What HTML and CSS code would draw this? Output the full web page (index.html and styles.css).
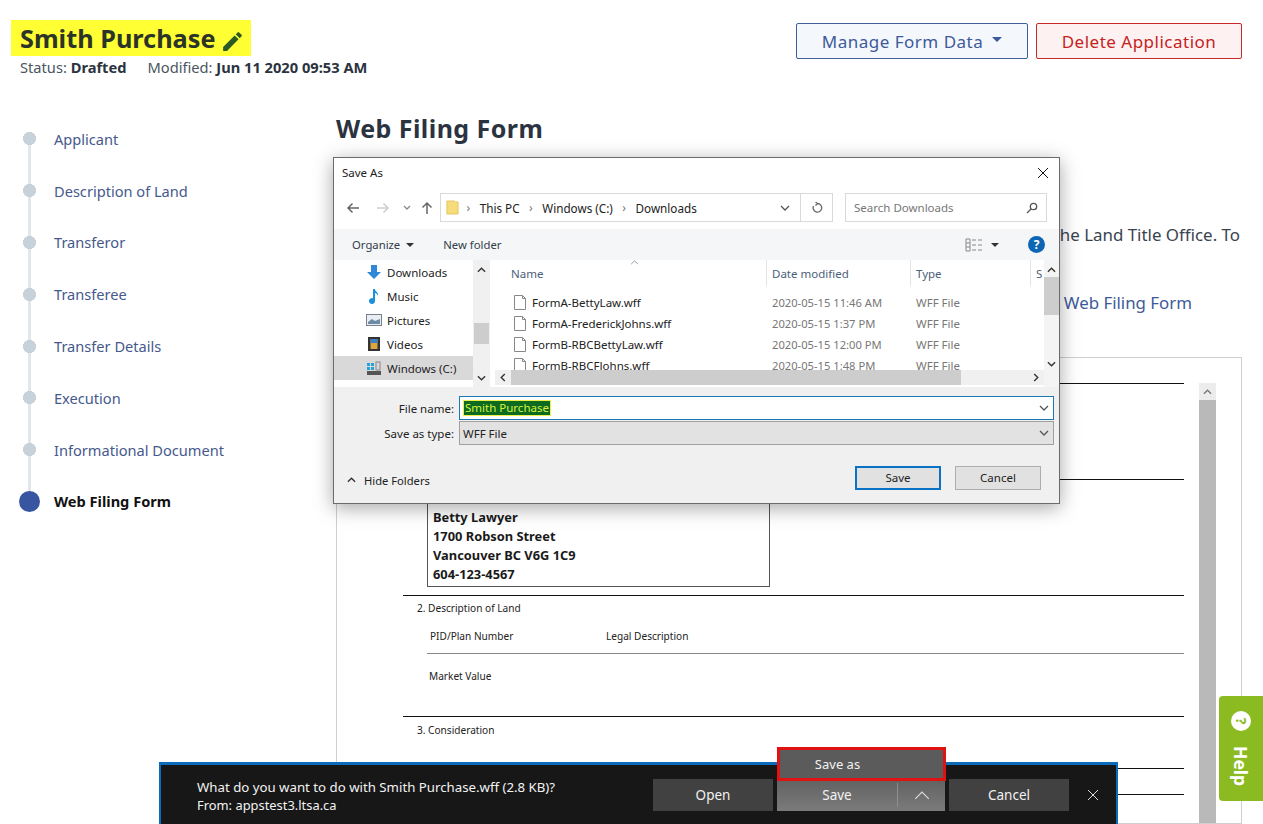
FILE: index.html
```html
<!DOCTYPE html>
<html lang="en">
<head>
<meta charset="utf-8">
<title>Smith Purchase</title>
<link rel="stylesheet" href="styles.css">
</head>
<body>
<header class="top">
  <div>
    <h2 class="app-title"><span>Smith Purchase</span>
      <svg class="pencil" viewBox="0 0 24 24"><path d="M3 17.25V21h3.75L17.8 9.94l-3.75-3.75L3 17.25zM20.7 7.04a1 1 0 0 0 0-1.41l-2.34-2.34a1 1 0 0 0-1.41 0l-1.83 1.83 3.75 3.75 1.83-1.83z"/></svg>
    </h2>
    <p class="status"><span>Status: <b>Drafted</b></span><span>Modified: <b>Jun 11 2020 09:53 AM</b></span></p>
  </div>
  <div class="top-actions">
    <button class="btn btn-blue">Manage Form Data<i class="caret"></i></button>
    <button class="btn btn-red">Delete Application</button>
  </div>
</header>

<main class="main">
  <ul class="steps">
    <li><i></i>Applicant</li>
    <li><i></i>Description of Land</li>
    <li><i></i>Transferor</li>
    <li><i></i>Transferee</li>
    <li><i></i>Transfer Details</li>
    <li><i></i>Execution</li>
    <li><i></i>Informational Document</li>
    <li class="active"><i></i>Web Filing Form</li>
  </ul>
  <section class="content">
    <h1>Web Filing Form</h1>
    <p class="intro">Download this form and submit it to the Land Title Office. To</p>
    <p class="link-row"><a>Web Filing Form</a></p>
    <div class="frame">
      <div class="doc">
        <div class="sec sec-a"></div>
        <div class="sec sec-b">
          <div class="addr">Betty Lawyer<br>1700 Robson Street<br>Vancouver BC V6G 1C9<br>604-123-4567</div>
        </div>
        <div class="sec sec-c">
          <div class="label">2. Description of Land</div>
          <div class="land-head"><span>PID/Plan Number</span><span>Legal Description</span></div>
          <div class="market">Market Value</div>
        </div>
        <div class="sec sec-d"><div class="label">3. Consideration</div></div>
        <div class="sec sec-e"></div>
        <div class="sec sec-f"></div>
      </div>
      <div class="vbar"><div class="vbar-up"><svg viewBox="0 0 10 6"><path d="M1 5l4-4 4 4"/></svg></div><div class="vbar-thumb"></div></div>
    </div>
  </section>
</main>

<aside class="help">
  <span class="help-q">?</span>
  <span class="help-text">Help</span>
</aside>

<div class="dialog">
  <div class="d-title"><span>Save As</span>
    <svg class="d-x" viewBox="0 0 12 12"><path d="M1 1l10 10M11 1L1 11"/></svg>
  </div>
  <div class="d-nav">
    <div class="d-arrows">
      <svg class="nav-ic" viewBox="0 0 14 14"><path d="M13 7H2M6.500 2.500L2 7l4.500 4.500"/></svg>
      <svg class="nav-ic faint" viewBox="0 0 14 14"><path d="M1 7h11M7.500 2.500L12 7l-4.500 4.500"/></svg>
      <svg class="nav-sm" viewBox="0 0 8 6"><path d="M1 1l3 3 3-3"/></svg>
      <svg class="nav-ic nav-up" viewBox="0 0 14 14"><path d="M7 13V2M2.500 6.500L7 2l4.500 4.500"/></svg>
    </div>
    <div class="d-address">
      <svg class="folder" viewBox="0 0 14 16"><path d="M1 1h8l1 1h3v13H1z" fill="#f7dc7c" stroke="#e2c25a"/></svg>
      <span class="crumb">›</span><span>This PC</span><span class="crumb">›</span><span>Windows (C:)</span><span class="crumb">›</span><span>Downloads</span>
      <svg class="addr-drop" viewBox="0 0 10 6"><path d="M1 1l4 4 4-4"/></svg>
      <span class="addr-refresh"><svg viewBox="0 0 12 12"><path d="M6.500 1.500A4.300 4.300 0 1 1 2.500 4M6.500 1.500L4.500 0M6.500 1.500L4.500 3.500"/></svg></span>
    </div>
    <div class="d-search"><span>Search Downloads</span>
      <svg viewBox="0 0 12 12"><circle cx="7.500" cy="4.500" r="3.200"/><path d="M5 7l-4 4"/></svg>
    </div>
  </div>
  <div class="d-tools">
    <span class="tool">Organize<i class="mini-caret"></i></span>
    <span class="tool tool-new">New folder</span>
    <svg class="view-ic" viewBox="0 0 18 14"><path d="M1 1h4v12H1zM1 5h4M1 9h4M7 2h4M13 2h4M7 7h4M13 7h4M7 12h4M13 12h4"/></svg>
    <i class="mini-caret view-caret"></i>
    <span class="q-ic">?</span>
  </div>
  <div class="d-body">
    <div class="tree">
      <div class="tree-row"><svg viewBox="0 0 16 16"><path d="M5 1h6v7h4l-7 7-7-7h4z" fill="#2f87d8"/></svg>Downloads</div>
      <div class="tree-row"><svg viewBox="0 0 16 16"><path d="M7 1h2c0 3 4 3 3 7-.5-2-2-3-3-3v8a3 3 0 1 1-2-2.800z" fill="#1c8fdd"/></svg>Music</div>
      <div class="tree-row"><svg viewBox="0 0 16 16"><rect x="0.500" y="2.500" width="15" height="11" fill="#e8eef3" stroke="#77818a"/><path d="M2 10l4-3 3 2 5-2v5H2z" fill="#6d8aa6"/></svg>Pictures</div>
      <div class="tree-row"><svg viewBox="0 0 16 16"><rect x="2" y="1" width="12" height="14" fill="#333"/><rect x="4.500" y="3" width="7" height="10" fill="#d9a640"/><rect x="4.500" y="3" width="7" height="4" fill="#3d7ec9"/></svg>Videos</div>
      <div class="tree-row selected"><svg viewBox="0 0 16 16"><rect x="1" y="11" width="14" height="4" fill="#555"/><rect x="1" y="3" width="3" height="3" fill="#27a3dc"/><rect x="5" y="3" width="3" height="3" fill="#27a3dc"/><rect x="1" y="7" width="3" height="3" fill="#27a3dc"/><rect x="5" y="7" width="3" height="3" fill="#27a3dc"/><rect x="10" y="2" width="4" height="8" fill="none" stroke="#888"/></svg>Windows (C:)</div>
    </div>
    <div class="tree-bar">
      <svg viewBox="0 0 10 6"><path d="M1 5l4-4 4 4"/></svg>
      <div class="tree-thumb"></div>
      <svg viewBox="0 0 10 6"><path d="M1 1l4 4 4-4"/></svg>
    </div>
    <div class="files">
      <div class="files-main">
        <div class="f-head">
          <span class="c-name">Name<svg class="sort" viewBox="0 0 10 6"><path d="M1 5l4-4 4 4"/></svg></span>
          <span class="c-date">Date modified</span>
          <span class="c-type">Type</span>
          <span class="c-size">S</span>
        </div>
        <div class="f-rows">
          <div class="f-row"><span class="c-name"><svg class="doc-ic" viewBox="0 0 12 15"><path d="M.5.5h8l3 3v11H.5zM8.500.5v3h3"/></svg>FormA-BettyLaw.wff</span><span class="c-date">2020-05-15 11:46 AM</span><span class="c-type">WFF File</span></div>
          <div class="f-row"><span class="c-name"><svg class="doc-ic" viewBox="0 0 12 15"><path d="M.5.5h8l3 3v11H.5zM8.500.5v3h3"/></svg>FormA-FrederickJohns.wff</span><span class="c-date">2020-05-15 1:37 PM</span><span class="c-type">WFF File</span></div>
          <div class="f-row"><span class="c-name"><svg class="doc-ic" viewBox="0 0 12 15"><path d="M.5.5h8l3 3v11H.5zM8.500.5v3h3"/></svg>FormB-RBCBettyLaw.wff</span><span class="c-date">2020-05-15 12:00 PM</span><span class="c-type">WFF File</span></div>
          <div class="f-row"><span class="c-name"><svg class="doc-ic" viewBox="0 0 12 15"><path d="M.5.5h8l3 3v11H.5zM8.500.5v3h3"/></svg>FormB-RBCFJohns.wff</span><span class="c-date">2020-05-15 1:48 PM</span><span class="c-type">WFF File</span></div>
        </div>
        <div class="hbar">
          <svg viewBox="0 0 6 10"><path d="M5 1L1 5l4 4"/></svg>
          <div class="hbar-thumb"></div>
          <svg viewBox="0 0 6 10"><path d="M1 1l4 4-4 4"/></svg>
        </div>
      </div>
      <div class="files-bar">
        <svg viewBox="0 0 10 6"><path d="M1 5l4-4 4 4"/></svg>
        <div class="files-thumb"></div>
        <svg viewBox="0 0 10 6"><path d="M1 1l4 4 4-4"/></svg>
      </div>
    </div>
  </div>
  <div class="d-foot">
    <div class="form-row row-name">
      <label>File name:</label>
      <div class="field field-name"><span class="sel">Smith Purchase</span><svg viewBox="0 0 10 6"><path d="M1 1l4 4 4-4"/></svg></div>
    </div>
    <div class="form-row">
      <label>Save as type:</label>
      <div class="field field-type"><span>WFF File</span><svg viewBox="0 0 10 6"><path d="M1 1l4 4 4-4"/></svg></div>
    </div>
    <div class="d-actions">
      <span class="hide-folders"><svg viewBox="0 0 10 6"><path d="M1 5l4-4 4 4"/></svg>Hide Folders</span>
      <button class="win-btn win-primary">Save</button>
      <button class="win-btn">Cancel</button>
    </div>
  </div>
</div>

<div class="dl-bar">
  <div class="dl-msg">What do you want to do with Smith Purchase.wff (2.8 KB)?<br><span class="dl-from">From: appstest3.ltsa.ca</span></div>
  <div class="dl-actions">
    <button class="dl-btn">Open</button>
    <div class="dl-split">
      <div class="dl-menu">Save as</div>
      <span class="dl-save">Save</span>
      <span class="dl-arrow"><svg viewBox="0 0 14 8"><path d="M1 7l6-6 6 6"/></svg></span>
    </div>
    <button class="dl-btn">Cancel</button>
    <span class="dl-close"><svg viewBox="0 0 12 12"><path d="M1 1l10 10M11 1L1 11"/></svg></span>
  </div>
</div>
</body>
</html>
```
FILE: styles.css
```css
* { box-sizing: border-box; }
html, body { margin: 0; height: 824px; overflow: hidden; }
body {
  position: relative;
  width: 1263px;
  display: flex;
  flex-direction: column;
  background: #fff;
  color: #2b3340;
  font-family: "Noto Sans", "Open Sans", sans-serif;
}
b { font-weight: 700; }
button { font-family: inherit; cursor: default; }
svg { display: block; fill: none; }

/* Page header */
.top {
  height: 112px;
  flex: none;
  display: flex;
  justify-content: space-between;
  padding: 20px 21px 0 11px;
}
.app-title {
  margin: 0;
  width: 240px;
  height: 36px;
  display: flex;
  align-items: center;
  padding-left: 9px;
  gap: 4px;
  background: #ffff33;
  color: #2c3428;
  font-size: 25.300px;
  font-weight: 700;
  white-space: nowrap;
}
.pencil { width: 25px; height: 25px; margin-top: 7px; fill: #2c5a24; flex: none; }
.status {
  margin: 1px 0 0 9px;
  display: flex;
  gap: 21px;
  font-size: 14.670px;
  line-height: 20px;
  color: #4b5560;
}
.status b { color: #2b3340; }
.top-actions { display: flex; gap: 8px; align-items: flex-start; margin-top: 3px; }
.btn {
  height: 36px;
  border-radius: 2px;
  font-size: 17px;
  letter-spacing: .5px;
  background: #fff;
}
.btn-blue {
  width: 232px;
  border: 1px solid #3f5f96;
  background: #f4f7fc;
  color: #3d5a99;
  display: flex;
  align-items: center;
  justify-content: center;
  gap: 9px;
}
.caret {
  width: 0; height: 0;
  border-left: 5px solid transparent;
  border-right: 5px solid transparent;
  border-top: 5px solid #3d5a99;
  margin-top: -3px;
}
.btn-red {
  width: 206px;
  border: 1px solid #c72a2a;
  background: #fdf2f1;
  color: #c52222;
}

/* Main area */
.main { flex: 1; min-height: 0; display: flex; }
.steps {
  list-style: none;
  margin: 1px 0 0;
  padding: 0 0 0 19px;
  width: 336px;
  flex: none;
  align-self: flex-start;
  background: linear-gradient(#e2e7ec, #e2e7ec) no-repeat 28px 26px / 3px calc(100% - 52px);
}
.steps li {
  height: 51.800px;
  display: flex;
  align-items: center;
  gap: 14px;
  font-size: 14.600px;
  color: #46598c;
}
.steps li i {
  flex: none;
  width: 21px;
  height: 13px;
  background: radial-gradient(circle 6.500px at center, #c6d1da 98%, transparent 100%);
}
.steps li.active { color: #111; font-weight: 700; }
.steps li.active i {
  height: 21px;
  border-radius: 50%;
  background: #3755a0;
}
.content { flex: 1; min-width: 0; padding-right: 21px; display: flex; flex-direction: column; }
.content h1 {
  margin: 0;
  font-size: 25px;
  line-height: 32px;
  font-weight: 700;
  letter-spacing: .45px;
  color: #2b3340;
}
.intro {
  margin: 80px 0 0;
  font-size: 16.900px;
  line-height: 22px;
  text-align: right;
  padding-right: 2px;
  white-space: nowrap;
  color: #3a4350;
}
.link-row {
  margin: 46px 0 0;
  font-size: 16.850px;
  line-height: 22px;
  text-align: right;
  padding-right: 50px;
  color: #3d5a99;
}
.frame {
  margin-top: 43px;
  flex: 1;
  min-height: 0;
  border: 1px solid #cfcfcf;
  display: flex;
  padding: 25px 25px 0 66px;
  overflow: hidden;
}
.doc { width: 781px; flex: none; font-size: 10.100px; color: #222; }
.sec { border-top: 1.500px solid #111; }
.sec-a { height: 96px; }
.sec-b { height: 116px; display: flex; flex-direction: column; justify-content: flex-end; padding: 0 0 8px 24px; }
.addr {
  width: 343px;
  border: 1px solid #555;
  padding: 12px 5px 2px;
  font-size: 12.850px;
  line-height: 19px;
  font-weight: 700;
  color: #1a1a1a;
}
.sec-c { height: 121px; }
.sec-d { height: 52px; }
.sec-d .label { padding-top: 6px; }
.sec-e { height: 26px; }
.label { padding: 5px 0 0 14px; line-height: 14px; }
.land-head {
  margin: 14px 0 0 24px;
  padding: 0 0 10px 3px;
  display: flex;
  line-height: 14px;
  border-bottom: 1px solid #888;
}
.land-head span:first-child { width: 176px; }
.market { margin: 15px 0 0 26px; line-height: 14px; }
.vbar { width: 17px; margin-left: 15px; flex: none; display: flex; flex-direction: column; }
.vbar-up { height: 17px; background: #ececec; display: flex; align-items: center; justify-content: center; }
.vbar-up svg { width: 9px; height: 6px; stroke: #777; stroke-width: 1.500; }
.vbar-thumb { flex: 1; background: #b9b9b9; }

/* Help tab */
.help {
  position: absolute;
  right: 0;
  top: 696px;
  width: 44px;
  height: 105px;
  background: #8bbb21;
  border-radius: 4px 0 0 4px;
  display: flex;
  flex-direction: column;
  align-items: center;
  padding-top: 15px;
  color: #fff;
}
.help-q {
  width: 20px;
  height: 20px;
  border-radius: 50%;
  background: #fff;
  color: #8bbb21;
  font-size: 14px;
  font-weight: 700;
  line-height: 20px;
  text-align: center;
  transform: rotate(90deg);
}
.help-text {
  margin-top: 15px;
  writing-mode: vertical-rl;
  font-size: 17.500px;
  line-height: 20px;
  font-weight: 700;
}

/* Save As dialog */
.dialog {
  position: absolute;
  left: 333px;
  top: 157px;
  width: 727px;
  height: 347px;
  border: 1px solid #6b6b6b;
  background: #fff;
  box-shadow: 0 4px 18px rgba(0, 0, 0, .35);
  display: flex;
  flex-direction: column;
  font-size: 12px;
  color: #222;
  font-family: "Noto Sans", "Open Sans", sans-serif;
}
.d-title {
  height: 29px;
  flex: none;
  display: flex;
  align-items: center;
  justify-content: space-between;
  padding: 0 10px 0 8px;
  font-size: 11.500px;
}
.d-x { width: 12px; height: 12px; stroke: #111; stroke-width: 1; }
.d-nav { height: 35px; flex: none; display: flex; padding: 6px 0 0 12px; }
.d-arrows { width: 94px; display: flex; align-items: center; gap: 0; }
.nav-ic { width: 14px; height: 14px; stroke: #666; stroke-width: 1.500; margin-right: 16px; flex: none; }
.nav-ic.faint { stroke: #cfcfcf; margin-right: 13px; }
.nav-ic.nav-up { margin-right: 0; }
.nav-sm { width: 8px; height: 6px; stroke: #888; stroke-width: 1.300; margin-right: 9px; flex: none; }
.d-address {
  width: 393px;
  height: 29px;
  border: 1px solid #d9d9d9;
  display: flex;
  align-items: center;
  padding-left: 5px;
  gap: 9.500px;
  font-size: 11.700px;
}
.folder { width: 13px; height: 17px; margin-right: -2px; flex: none; }
.crumb { color: #777; font-size: 12px; }
.addr-drop { width: 10px; height: 6px; stroke: #555; stroke-width: 1.300; margin-left: auto; margin-right: 1px; flex: none; }
.addr-refresh {
  width: 32px;
  height: 100%;
  border-left: 1px solid #d9d9d9;
  display: flex;
  align-items: center;
  justify-content: center;
  flex: none;
}
.addr-refresh svg { width: 12px; height: 12px; stroke: #666; stroke-width: 1.300; }
.d-search {
  width: 202px;
  height: 29px;
  margin-left: 12px;
  border: 1px solid #d9d9d9;
  display: flex;
  align-items: center;
  justify-content: space-between;
  padding: 0 8px;
  font-size: 11.500px;
  color: #777;
}
.d-search svg { width: 12px; height: 12px; stroke: #555; stroke-width: 1.300; }
.d-tools {
  margin-top: 7px;
  height: 31px;
  flex: none;
  background: #f4f6f8;
  display: flex;
  align-items: center;
  padding-left: 18px;
  font-size: 11.300px;
  color: #333d48;
}
.tool { display: flex; align-items: center; gap: 6px; }
.tool-new { margin-left: 29px; }
.mini-caret {
  width: 0; height: 0;
  border-left: 4px solid transparent;
  border-right: 4px solid transparent;
  border-top: 4px solid #333;
}
.view-ic { width: 18px; height: 14px; margin-left: auto; stroke: #888; stroke-width: 1; }
.view-caret { margin-left: 8px; }
.q-ic {
  width: 17px;
  height: 17px;
  margin: 0 14px 0 29px;
  border-radius: 50%;
  background: #0d66b3;
  color: #fff;
  font-weight: 700;
  font-size: 12px;
  line-height: 17px;
  text-align: center;
}
.d-body { height: 127px; flex: none; display: flex; background: #fff; }
.tree { width: 139px; flex: none; padding-top: 0; overflow: hidden; }
.tree-row {
  height: 24px;
  display: flex;
  align-items: center;
  gap: 5px;
  padding-left: 32px;
  font-size: 11.500px;
  color: #222;
}
.tree-row svg { width: 16px; height: 16px; flex: none; }
.tree-row.selected { background: #d9d9d9; }
.tree-bar {
  width: 17px;
  flex: none;
  background: #f0f0f0;
  display: flex;
  flex-direction: column;
  align-items: center;
  padding: 7px 0 6px;
}
.tree-bar svg, .files-bar svg { width: 9px; height: 6px; stroke: #333; stroke-width: 1.500; flex: none; }
.tree-thumb { width: 15px; height: 21px; background: #cdcdcd; margin: 50px 0 auto; }
.files { flex: 1; min-width: 0; display: flex; }
.files-main { flex: 1; min-width: 0; display: flex; flex-direction: column; }
.f-head {
  height: 26px;
  flex: none;
  display: flex;
  align-items: center;
  font-size: 11.500px;
  color: #4c607a;
}
.f-head .c-name { position: relative; padding-left: 21px; height: 100%; display: flex; align-items: center; }
.f-head .c-date, .f-head .c-type, .f-head .c-size { height: 100%; display: flex; align-items: center; border-left: 1px solid #e5e5e5; padding-left: 5px; }
.sort { position: absolute; left: 140px; top: 0; width: 9px; height: 5px; stroke: #888; stroke-width: 1; }
.c-name { width: 276px; flex: none; }
.c-date { width: 144px; flex: none; padding-left: 6px; }
.c-type { width: 120px; flex: none; padding-left: 6px; }
.c-size { flex: 1; padding-left: 6px; overflow: hidden; }
.f-rows { flex: 1; min-height: 0; overflow: hidden; padding-top: 6px; }
.f-row {
  height: 21px;
  display: flex;
  align-items: center;
  font-size: 11.500px;
  color: #777;
}
.f-row .c-date { font-size: 11.200px; }
.f-row .c-name { display: flex; align-items: center; gap: 6px; padding-left: 24px; color: #222; }
.doc-ic { width: 12px; height: 15px; stroke: #888; stroke-width: 1; fill: #fff; flex: none; }
.hbar {
  height: 15px;
  margin-bottom: 2px;
  margin-left: 5px;
  flex: none;
  display: flex;
  align-items: center;
  background: #f0f0f0;
}
.hbar svg { width: 6px; height: 9px; stroke: #333; stroke-width: 1.500; flex: none; margin: 0 5px; }
.hbar-thumb { width: 450px; height: 100%; background: #cdcdcd; margin-right: auto; }
.files-bar {
  width: 15px;
  flex: none;
  display: flex;
  flex-direction: column;
  align-items: center;
  padding: 7px 0 20px;
  background: #f4f4f4;
}
.files-thumb { width: 15px; height: 38px; background: #cdcdcd; margin: 4px 0 auto; }
.d-foot {
  flex: 1;
  background: #f0f0f0;
  display: flex;
  flex-direction: column;
  padding: 9px 5px 0 0;
}
.form-row { display: flex; align-items: center; height: 24px; gap: 5px; font-size: 11.500px; }
.row-name { margin-bottom: 1px; }
.form-row label { width: 120px; text-align: right; flex: none; }
.field {
  flex: 1;
  height: 100%;
  display: flex;
  align-items: center;
  justify-content: space-between;
  padding: 0 4px 0 3px;
}
.field svg { width: 10px; height: 6px; stroke: #555; stroke-width: 1.300; }
.field-name { background: #fff; border: 1px solid #1c78b5; padding-left: 4px; }
.field-type { background: #e2e2e2; border: 1px solid #a0a0a0; }
.sel {
  background: #0c6b1e;
  color: #d8f23f;
  outline: 1px solid #eef04a;
  padding: 0 1px;
  line-height: 14px;
}
.d-actions { display: flex; align-items: center; margin-top: 21px; padding-right: 13px; }
.hide-folders { display: flex; align-items: center; gap: 8px; margin-right: auto; padding: 4px 0 0 13px; font-size: 11.200px; }
.hide-folders svg { width: 9px; height: 6px; stroke: #333; stroke-width: 1.500; }
.win-btn {
  width: 86px;
  height: 24px;
  border: 1px solid #adadad;
  background: #e1e1e1;
  color: #222;
  font-size: 11.500px;
  padding: 0 0 2px;
  margin-left: 14px;
}
.win-primary { border: 2px solid #0a72c4; }

/* Download bar */
.dl-bar {
  position: absolute;
  left: 159px;
  bottom: 0;
  width: 959px;
  height: 62px;
  background: #171717;
  border: 2px solid #0a6cba;
  border-width: 3px 2px 0;
  display: flex;
  align-items: center;
  color: #fff;
}
.dl-msg {
  padding: 0 0 0 36px;
  margin-top: 2px;
  font-size: 13.240px;
  line-height: 18px;
  color: #f2f2f2;
  font-family: "Noto Sans", "Open Sans", sans-serif;
  white-space: nowrap;
}
.dl-from { font-size: 12.900px; }
.dl-actions { margin-left: auto; display: flex; align-items: center; gap: 4px; height: 32px; margin-top: 1px; }
.dl-btn {
  width: 120px;
  height: 32px;
  border: 0;
  background: #414141;
  color: #f2f2f2;
  font-size: 13.500px;
  padding: 0;
}
.dl-split {
  position: relative;
  width: 168px;
  height: 32px;
  display: flex;
  align-items: center;
  background: linear-gradient(#616161, #7b7b7b);
  font-size: 13.500px;
}
.dl-save { width: 120px; text-align: center; color: #f2f2f2; }
.dl-arrow {
  width: 48px;
  height: 24px;
  border-left: 1px solid #8f8f8f;
  display: flex;
  align-items: center;
  justify-content: center;
}
.dl-arrow svg { width: 16px; height: 9px; stroke: #ddd; stroke-width: 1; }
.dl-menu {
  position: absolute;
  left: 0;
  bottom: 30px;
  width: 169px;
  height: 34px;
  border: 3px solid #e01212;
  background: #5b5b5b;
  color: #f2f2f2;
  font-size: 13px;
  line-height: 29px;
  text-align: center;
  padding-right: 48px;
}
.dl-close { width: 43px; display: flex; justify-content: center; flex: none; padding-right: 4px; }
.dl-close svg { width: 12px; height: 12px; stroke: #ddd; stroke-width: 1; }
```
